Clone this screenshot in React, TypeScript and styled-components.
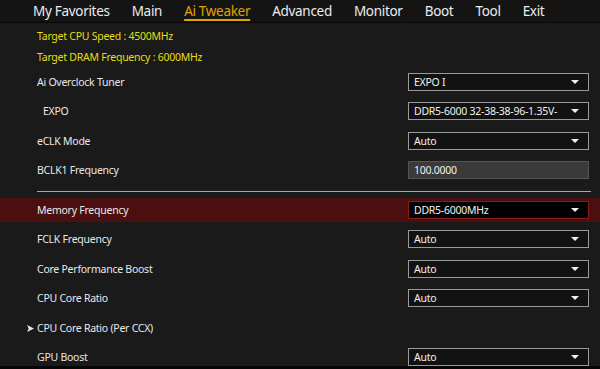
import styled, { createGlobalStyle } from "styled-components";

const GlobalStyle = createGlobalStyle`
  html, body {
    margin: 0;
    padding: 0;
    background: #0a0a0a;
  }
`;

type Item = {
  label: string;
  value?: string;
  kind?: "select" | "input" | "none";
  indent?: boolean;
  sub?: boolean;
  active?: boolean;
};

const tabs = ["My Favorites", "Main", "Ai Tweaker", "Advanced", "Monitor", "Boot", "Tool", "Exit"];

const topItems: Item[] = [
  { label: "Ai Overclock Tuner", value: "EXPO I" },
  { label: "EXPO", value: "DDR5-6000 32-38-38-96-1.35V-", indent: true },
  { label: "eCLK Mode", value: "Auto" },
  { label: "BCLK1 Frequency", value: "100.0000", kind: "input" },
];

const bottomItems: Item[] = [
  { label: "Memory Frequency", value: "DDR5-6000MHz", active: true },
  { label: "FCLK Frequency", value: "Auto" },
  { label: "Core Performance Boost", value: "Auto" },
  { label: "CPU Core Ratio", value: "Auto" },
  { label: "CPU Core Ratio (Per CCX)", kind: "none", sub: true },
  { label: "GPU Boost", value: "Auto" },
];

export default function App() {
  const renderRow = (item: Item) => (
    <Row key={item.label} $active={item.active}>
      <Label $indent={item.indent}>
        {item.sub && (
          <SubArrow viewBox="0 0 8 8">
            <path d="M0 0 L8 4 L0 8 L2 4 Z" fill="#e8e8e8" />
          </SubArrow>
        )}
        {item.label}
      </Label>
      {item.kind === "input" && <InputBox>{item.value}</InputBox>}
      {(item.kind === undefined || item.kind === "select") && (
        <SelectBox $active={item.active}>
          <span>{item.value}</span>
          <Caret viewBox="0 0 8 4">
            <path d="M0 0 H8 L4 4 Z" fill="#f0f0f0" />
          </Caret>
        </SelectBox>
      )}
    </Row>
  );

  return (
    <Screen>
      <GlobalStyle />
      <NavBar>
        <Decor viewBox="0 0 600 23" preserveAspectRatio="none">
          <path d="M372 0 L352 23" stroke="#3a0c0c" strokeWidth="1" />
          <path d="M418 0 L402 23" stroke="#2e0a0a" strokeWidth="1" />
          <path d="M560 0 L548 23" stroke="#2a0909" strokeWidth="1" />
          <path d="M130 0 L118 6" stroke="#2a0909" strokeWidth="1" />
        </Decor>
        {tabs.map((t) => (
          <Tab key={t} $active={t === "Ai Tweaker"}>
            {t}
          </Tab>
        ))}
      </NavBar>
      <Content>
        <Info $first>Target CPU Speed : 4500MHz</Info>
        <Info>Target DRAM Frequency : 6000MHz</Info>
        {topItems.map(renderRow)}
        <Divider />
        {bottomItems.map(renderRow)}
      </Content>
      <BottomBand />
    </Screen>
  );
}

const Screen = styled.div`
  width: 600px;
  height: 369px;
  overflow: hidden;
  display: flex;
  flex-direction: column;
  background: #1a1a1a;
  font-family: "Noto Sans", "Open Sans", sans-serif;
  color: #e8e8e8;
`;

const NavBar = styled.div`
  position: relative;
  height: 23px;
  flex: 0 0 23px;
  box-sizing: border-box;
  display: flex;
  align-items: center;
  padding-left: 33px;
  background: #141414;
  border-bottom: 1px solid #070707;
`;

const Decor = styled.svg`
  position: absolute;
  left: 0;
  top: 0;
  width: 600px;
  height: 23px;
`;

const Tab = styled.div<{ $active?: boolean }>`
  position: relative;
  white-space: nowrap;
  font-size: 13.5px;
  line-height: 20px;
  margin-right: 22px;
  color: ${(p) => (p.$active ? "#e0a300" : "#ececec")};
  text-decoration: ${(p) => (p.$active ? "underline" : "none")};
  text-decoration-thickness: 2px;
  text-underline-offset: 3px;
  letter-spacing: -0.3px;
`;

const Content = styled.div`
  flex: 1;
  padding: 2px 11px 0 37px;
  display: flex;
  flex-direction: column;
  overflow: hidden;
`;

const Info = styled.div<{ $first?: boolean }>`
  flex: 0 0 ${(p) => (p.$first ? "23px" : "19px")};
  box-sizing: border-box;
  padding-top: ${(p) => (p.$first ? "2px" : "0")};
  line-height: 19px;
  font-size: 10.5px;
  letter-spacing: -0.25px;
  white-space: nowrap;
  color: #e6df14;
`;

const Row = styled.div<{ $active?: boolean }>`
  flex: 0 0 29.5px;
  display: flex;
  align-items: center;
  justify-content: space-between;
  margin-left: -37px;
  margin-right: -11px;
  padding: 0 11px 0 37px;
  position: relative;
  background: ${(p) =>
    p.$active ? "linear-gradient(#1a1a1a 3px, #4c0f0f 3px, #4c0f0f 27px, #1a1a1a 27px)" : "transparent"};
`;

const Label = styled.div<{ $indent?: boolean }>`
  position: relative;
  font-size: 10.5px;
  letter-spacing: -0.25px;
  white-space: nowrap;
  color: #e8e8e8;
  padding-left: ${(p) => (p.$indent ? "6px" : "0")};
`;

const SubArrow = styled.svg`
  position: absolute;
  left: -10px;
  top: 4px;
  width: 7px;
  height: 7px;
`;

const SelectBox = styled.div<{ $active?: boolean }>`
  width: 181px;
  height: 18px;
  box-sizing: border-box;
  display: flex;
  align-items: center;
  justify-content: space-between;
  padding: 0 9px 0 5px;
  background: ${(p) => (p.$active ? "#000" : "#121212")};
  border: 1px solid ${(p) => (p.$active ? "#8a1c1c" : "#9a9a9a")};
  font-size: 10.5px;
  letter-spacing: -0.25px;
  white-space: nowrap;
  overflow: hidden;
  color: #f0f0f0;
`;

const Caret = styled.svg`
  flex: 0 0 8px;
  width: 8px;
  height: 4px;
`;

const InputBox = styled.div`
  width: 181px;
  height: 18px;
  box-sizing: border-box;
  display: flex;
  align-items: center;
  padding: 0 5px;
  background: #3a3a3a;
  border: 1px solid #555;
  font-size: 10.5px;
  letter-spacing: -0.25px;
  color: #f0f0f0;
`;

const Divider = styled.div`
  flex: 0 0 10px;
  margin-right: -2px;
  background: linear-gradient(transparent 6px, #a8a8a8 6px, #a8a8a8 7px, transparent 7px);
`;

const BottomBand = styled.div`
  flex: 0 0 3px;
  background: #050505;
`;
